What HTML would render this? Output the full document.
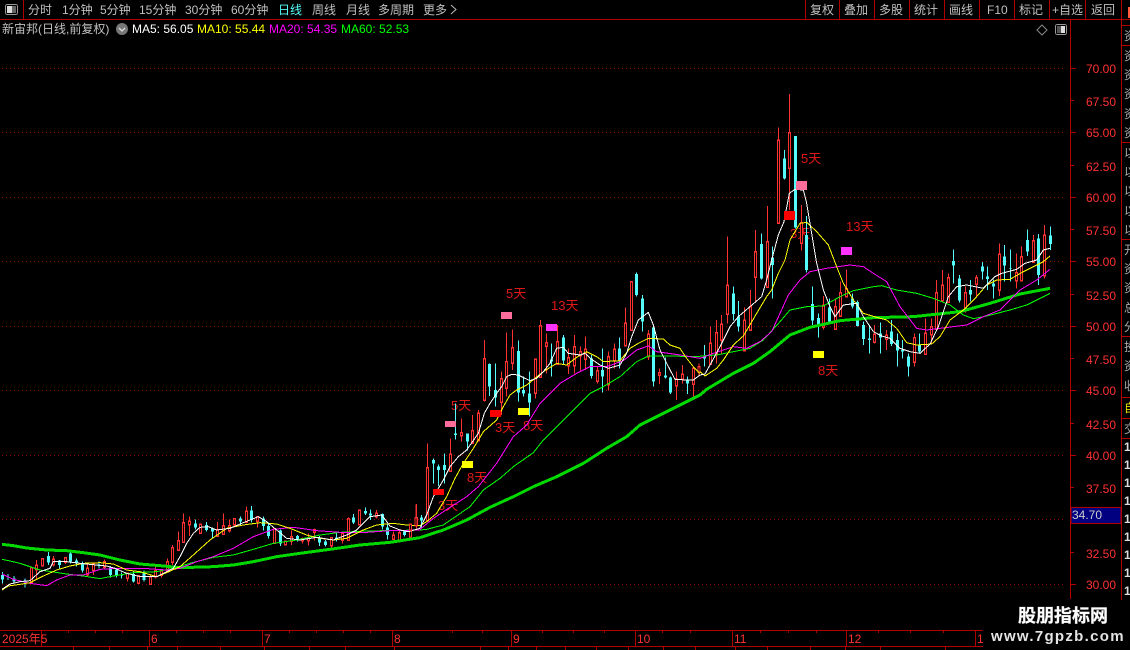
<!DOCTYPE html>
<html><head><meta charset="utf-8"><style>
html,body{margin:0;padding:0;background:#000;width:1130px;height:650px;overflow:hidden}
svg{display:block;font-family:"Liberation Sans","WenQuanYi Zen Hei","Noto Sans CJK SC",sans-serif;font-size:12px}
.c{shape-rendering:crispEdges}
.rw{stroke:#ff3232;stroke-width:3;fill:none}
.rb{stroke:#ff3232;stroke-width:9;stroke-linecap:square;fill:none}
.rk{stroke:#000;stroke-width:3;fill:none}
.cw{stroke:#54fcfc;stroke-width:3;fill:none}
.cb{stroke:#54fcfc;stroke-width:9;fill:none}
.w,.y,.m,.g,.t{fill:none}
.w{stroke:#fff;stroke-width:3}.y{stroke:#ff0;stroke-width:3}.m{stroke:#f0f;stroke-width:3}.g{stroke:#0f0;stroke-width:3}.t{stroke:#00d800;stroke-width:9}
.tb{fill:#c0c0c0}.ax{fill:#ff3232;letter-spacing:0}.lb{fill:#e01818;font-size:13px}.sd{fill:#aaa;font-size:12px}
</style></head><body>
<svg width="1130" height="650" viewBox="0 0 1130 650" xmlns="http://www.w3.org/2000/svg">
<rect width="1130" height="650" fill="#000"/>
<g class="c" stroke="#8c0000" stroke-width="1" stroke-dasharray="1 3">
<path d="M2 68.5H1066M2 132.5H1066M2 197.5H1066M2 261.5H1066M2 326.5H1066M2 390.5H1066M2 455.5H1066M2 519.5H1066M2 584.5H1066"/>
</g>
<g class="lb">
<text x="506" y="298">5天</text><text x="551" y="310">13天</text><text x="451" y="410">5天</text><text x="495" y="432">3天</text><text x="523" y="430">8天</text><text x="467" y="482">8天</text><text x="438" y="510">3天</text><text x="801" y="163">5天</text><text x="846" y="231">13天</text><text x="790" y="238">3天</text><text x="818" y="375">8天</text>
</g>
<defs>
<path id="b5" d="M94 205V248M110 198V207M127 178V195M160 180V192M196 176V185M263 207V222M280 195V208M313 188V200M382 222V232M416 230V248M451 232V250M466 215V228M485 215V224M502 188V212M517 145V185M535 125V148M550 70V125M568 66V72M602 75V97M652 92V106M670 80V100M688 80V90M703 58V72M739 36V65M772 52V62M823 88V128M857 126V132M874 112V122M908 118V120M925 115V120M943 92V94M994 116V135M1027 102V118M1045 58V118M1078 33V72M1129 42V48M1180 108V115M1198 100V118M1231 75V110M1249 55V75"/>
<path id="b3" d="M31 765V778M48 745V765M82 595V750M151 555V602M184 490V495M218 485V518M235 432V510M253 268V388M304 328V395M320 277V352M337 235V277M406 270V368M422 170V320M439 220V227M472 217V280M505 265V285M523 232V285M541 248V255M557 240V265M592 305V332M625 262V342M643 240V270M676 162V225M694 37V178M745 195V258M778 310V314M829 330V345M847 315V325M880 297V340M897 293V305"/>
<path id="b4" d="M31 762V820M49 730V790M64 705V748M82 588V670M133 693V780M151 652V718M166 487V560M202 457V590M235 153V397M268 130V232M304 400V457M370 648V710M406 652V716M421 610V676M439 598V618M523 735V755M559 738V745M643 745V815M676 732V790M694 712V732M709 610V715M727 588V630M745 565V635M796 610V660M829 565V580M898 495V598M949 550V570M964 502V570M1000 455V515M1033 438V555"/>
</defs>
<g class="c" transform="translate(0 500) scale(.33333)">
<path class="rw" d="M94 200V250M110 180V235M127 178V200M160 168V200M196 172V192M263 190V228M280 188V225M313 178V208M382 218V244M416 225V250M451 225V255M466 200V235M485 212V232M502 175V215M517 135V195M535 95V150M550 40V128M568 50V108M602 70V100M652 66V110M670 40V102M688 58V97M703 58V78M739 20V70M772 48V82M823 85V132M857 122V136M874 92V135M908 112V130M925 100V136M943 85V122M994 112V142M1027 100V130M1045 52V122M1078 28V75M1129 30V55M1180 95V118M1198 90V122M1231 75V118M1249 12V85"/>
<use href="#b5" class="rb"/><use href="#b5" class="rk"/>
<path class="cw" d="M8 216V250M24 222V240M42 228V250M75 235V262M145 156V195M178 180V207M212 155V190M230 175V200M247 185V218M297 185V205M331 198V232M349 205V232M365 218V236M400 215V248M432 212V244M586 58V88M619 66V95M637 82V115M721 50V78M754 18V68M790 50V92M806 68V115M841 88V138M892 105V125M959 108V138M976 120V140M1010 98V125M1060 42V72M1096 22V45M1111 28V60M1147 40V88M1162 72V118M1214 90V110"/>
<path class="cb" d="M8 225V238M42 236V245M75 242V248M145 168V188M178 182V195M212 160V185M230 182V190M247 192V212M297 193V198M331 202V225M349 208V225M365 224V226M400 222V245M432 218V240M586 70V82M619 75V90M637 85V95M721 55V65M754 32V60M790 55V78M806 78V108M841 92V130M892 108V120M959 112V128M976 125V135M1010 112V120M1060 52V68M1096 33V40M1111 40V46M1147 42V80M1162 82V105M1214 95V105"/>
<path class="t" d="M6 133L40 137 80 144 140 150 200 152 250 158 300 165 360 180 420 192 480 197 540 203 640 200 700 195 760 185 830 170 900 160 990 148 1080 135 1170 127 1260 113"/>
<path class="g" d="M6 178L30 183 60 190 120 210 200 222 250 228 300 236 340 228 400 218 470 215 520 205 570 190 640 172 700 165 760 148 820 130 890 120 960 105 1020 97 1100 93 1260 90"/>
<path class="m" d="M6 222L40 238 90 250 140 257 170 240 210 225 250 225 300 208 350 205 430 205 500 210 540 205 590 185 640 170 700 145 760 110 820 88 880 82 950 92 1020 97 1100 97 1170 92 1260 90"/>
<path class="y" d="M6 270L25 258 60 253 90 248 130 228 170 210 210 198 250 190 300 188 340 192 380 210 420 215 470 230 500 218 540 200 580 165 630 120 680 85 730 75 780 68 830 72 870 85 920 105 960 115 1000 120 1040 115 1090 90 1130 75 1180 70 1220 75 1260 77"/>
<path class="w" d="M6 268L30 252 60 245 90 242 120 215 150 205 160 185 200 185 240 190 290 195 320 198 345 205 380 220 420 230 470 230 500 215 520 205 540 170 560 130 580 100 600 82 625 80 650 90 690 85 730 68 775 50 800 65 830 90 860 115 900 120 950 112 1000 120 1040 105 1070 90 1110 50 1145 45 1170 78 1200 90 1225 95 1260 85"/>
</g>
<g class="c" transform="translate(400 270) scale(.33333)">
<path class="rw" d="M31 760V780M48 703V770M82 520V755M151 505V605M184 445V515M218 435V520M235 420V515M253 210V395M304 305V435M320 187V380M337 178V300M406 270V385M422 150V322M439 190V310M472 165V280M505 235V312M523 195V310M541 230V302M557 200V300M592 290V340M625 245V362M643 220V295M676 112V230M694 35V180M745 180V270M778 295V342M829 305V390M847 285V340M880 295V380M897 280V320"/>
<use href="#b3" class="rb"/><use href="#b3" class="rk"/>
<path class="cw" d="M64 735V775M100 565V640M115 583V648M133 550V640M166 400V508M202 490V542M268 280V378M286 280V410M355 212V395M370 320V380M388 305V440M455 220V320M490 195V285M574 255V325M607 235V368M658 202V295M710 8V80M727 75V185M761 170V350M796 262V325M812 320V372M862 320V372"/>
<path class="cb" d="M64 742V752M100 570V580M115 590V600M133 585V600M166 490V495M202 490V515M268 282V350M286 360V382M355 243V368M370 360V370M388 370V398M455 268V275M490 202V272M574 265V318M607 300V320M658 235V275M710 12V75M727 85V155M761 172V335M796 316V322M812 322V368M862 330V340"/>
<path class="t" d="M60 803L130 780 200 750 270 712 340 680 400 650 470 620 550 580 620 535 680 500 720 465 800 425 850 400 900 375"/>
<path class="g" d="M60 780L80 778 130 765 210 710 250 660 300 625 340 590 400 548 430 510 480 460 530 410 570 370 610 350 660 320 710 275 745 258 800 258 900 260"/>
<path class="m" d="M60 778L100 745 130 725 200 680 235 650 290 580 340 500 380 465 420 400 480 340 530 310 570 290 620 290 670 272 710 240 745 228 770 245 840 255 900 265"/>
<path class="y" d="M60 767L80 755 110 730 140 680 165 625 190 580 220 535 250 485 290 450 310 410 330 375 350 360 380 345 405 325 430 305 470 280 500 285 530 262 560 245 590 260 610 275 660 272 690 235 715 220 745 205 790 207 810 225 840 235 860 265 880 290 900 310"/>
<path class="w" d="M60 774L80 735 100 680 130 630 150 590 175 560 200 540 235 490 253 430 270 400 290 370 305 350 320 320 335 313 355 315 375 325 390 332 410 325 430 305 450 280 470 235 490 232 505 250 540 255 555 250 575 268 600 285 625 295 660 285 680 250 695 200 715 150 745 127 760 165 780 240 800 280 825 328 860 330 880 330 900 315"/>
</g>
<g class="c" transform="translate(700 90) scale(.33333)">
<path class="rw" d="M31 710V820M49 690V820M64 675V790M82 440V700M133 652V785M151 600V720M166 420V635M202 348V590M235 112V398M268 12V360M304 345V482M370 618V718M406 625V718M421 575V680M439 538V620M523 705V760M559 720V780M643 730V830M676 685V792M694 685V762M709 570V718M727 540V632M745 550V638M796 590V668M829 555V620M898 460V618M949 490V595M964 470V572M1000 435V515M1033 405V565"/>
<use href="#b4" class="rb"/><use href="#b4" class="rk"/>
<path class="cw" d="M13 765V830M100 590V692M115 633V725M184 430V568M218 470V625M253 180V268M286 138V415M319 378V548M337 590V705M355 670V742M388 625V703M457 610V655M472 632V710M490 695V765M508 705V790M541 698V790M574 690V768M592 730V830M607 750V805M625 790V860M658 730V790M761 478V580M778 555V638M812 570V635M847 516V568M862 530V600M881 568V625M913 465V575M931 478V575M982 418V498M1015 432V585M1051 410V480"/>
<path class="cb" d="M13 800V805M100 610V672M115 680V710M184 462V565M218 502V525M253 205V265M286 138V412M319 435V540M337 642V692M355 684V706M388 652V700M457 625V650M472 636V708M490 705V747M508 745V750M541 730V742M574 725V762M592 750V782M607 780V785M625 800V830M658 765V785M761 513V527M778 565V632M812 600V613M847 530V545M862 560V567M881 580V590M913 500V527M931 535V537M982 450V485M1015 445V555M1051 437V462"/>
<path class="t" d="M0 915L20 898 100 850 160 820 210 785 270 735 330 712 420 692 520 683 640 680 780 665 870 640 960 612 1050 595"/>
<path class="g" d="M0 798L50 795 100 785 150 775 190 750 240 695 270 660 320 650 370 648 420 620 460 602 520 590 545 587 590 600 650 610 700 625 750 645 790 675 820 686 860 678 930 660 980 645 1050 610"/>
<path class="m" d="M0 805L40 790 100 770 140 775 180 755 215 725 240 670 265 615 300 570 330 545 380 535 450 525 490 530 520 550 560 575 600 650 650 715 680 720 720 715 800 705 850 680 900 660 960 600 1010 570 1050 538"/>
<path class="y" d="M0 845L15 858 50 835 70 810 100 765 130 738 170 670 200 620 215 600 235 550 255 510 270 450 300 400 320 397 350 425 385 465 410 530 430 580 460 630 490 670 530 682 560 690 590 715 620 758 650 765 695 762 720 740 750 690 790 660 830 620 860 585 890 570 930 568 970 545 1010 525 1030 515 1050 498"/>
<path class="w" d="M0 855L15 852 30 825 60 770 90 710 115 680 150 650 185 620 200 570 215 510 235 435 252 395 268 310 285 298 310 300 320 340 335 430 350 520 370 600 390 650 405 680 430 645 470 640 490 680 520 725 545 738 570 745 600 775 630 785 660 790 690 762 715 710 745 620 770 590 800 585 850 595 885 560 905 550 950 538 975 520 1010 510 1030 480 1050 475"/>
</g>
<g class="c">
<rect x="433" y="489" width="11" height="6" fill="#f00"/><rect x="462" y="461" width="11" height="7" fill="#ff0"/><rect x="445" y="421" width="11" height="6" fill="#ff6e9b"/><rect x="490" y="410" width="11" height="7" fill="#f00"/><rect x="518" y="408" width="11" height="7" fill="#ff0"/><rect x="501" y="312" width="11" height="7" fill="#ff6e9b"/><rect x="546" y="324" width="11" height="7" fill="#ff32ff"/><rect x="796" y="181" width="11" height="9" fill="#ff6e9b"/><rect x="784" y="211" width="11" height="9" fill="#f00"/><rect x="841" y="247" width="11" height="8" fill="#ff32ff"/><rect x="813" y="351" width="11" height="7" fill="#ff0"/>
<g stroke="#b00000" fill="none" stroke-width="1">
<path d="M0 19.5H1130M23.5 0V19M805.5 0V19M839.5 0V19M874.5 0V19M909.5 0V19M944.5 0V19M979.5 0V19M1014.5 0V19M1049.5 0V19M1085.5 0V19M1121.5 0V25"/>
<path d="M1070.5 20V599M1121.5 25V600M1121 25.5H1130M1121 45.5H1130M1121 142.5H1130M1121 239.5H1130M1121 336.5H1130M1121 397.5H1130M1121 418.5H1130M1121 438.5H1130"/>
<path d="M1071 68.5H1076M1071 100.5H1074M1071 132.5H1076M1071 165.5H1074M1071 197.5H1076M1071 229.5H1074M1071 261.5H1076M1071 294.5H1074M1071 326.5H1076M1071 358.5H1074M1071 390.5H1076M1071 423.5H1074M1071 455.5H1076M1071 487.5H1074M1071 552.5H1074M1071 584.5H1076"/>
<path d="M0 630.5H983M0 646.5H983M41.5 630V646M149.5 630V646M262.5 630V646M392.5 630V646M511.5 630V646M635.5 630V646M732.5 630V646M846.5 630V646M975.5 630V646"/>
<path d="M68.5 631V633M95.5 631V633M122.5 631V633M176.5 631V633M203.5 631V633M230.5 631V633M289.5 631V633M316.5 631V633M343.5 631V633M370.5 631V633M452.5 631V633M482.5 631V633M542.5 631V633M573.5 631V633M604.5 631V633M662.5 631V633M690.5 631V633M760.5 631V633M788.5 631V633M816.5 631V633M878.5 631V633M910.5 631V633M943.5 631V633"/>
<path d="M73.5 647V650M109.5 647V650M147.5 647V650M177.5 647V650M220.5 647V650M264.5 647V650M309.5 647V650M345.5 647V650M394.5 647V650M480.5 647V650M508.5 647V650M536.5 647V650M565.5 647V650M596.5 647V650M628.5 647V650M663.5 647V650M695.5 647V650M735.5 647V650M767.5 647V650M810.5 647V650M845.5 647V650M880.5 647V650M945.5 647V650"/>
</g>
<rect x="1071" y="507.500" width="50" height="16" fill="#000080" stroke="#b00000"/>
<rect x="1128" y="7" width="2" height="11" fill="#ff5a3c"/>
<rect x="5.500" y="4.500" width="12" height="10" rx="2" fill="none" stroke="#999"/>
<rect x="7" y="6" width="5" height="7" fill="#ddd"/><rect x="12" y="6" width="4" height="7" fill="#666"/>
<rect x="1055.500" y="24.500" width="11" height="10" rx="2" fill="none" stroke="#999"/>
<rect x="1061" y="26" width="4" height="7" fill="#ddd"/><rect x="1057" y="26" width="4" height="7" fill="#555"/>
</g>
<path d="M1042 25L1047 30 1042 35 1037 30Z" fill="none" stroke="#888"/>
<circle cx="122" cy="29" r="6" fill="#777"/>
<path d="M119 28L122 31 125 28" fill="none" stroke="#ddd" stroke-width="1.300"/>
<path d="M451 5L456 9.500 451 14" fill="none" stroke="#bbb"/>
<g class="tb">
<text x="28" y="14">分时</text><text x="62" y="14">1分钟</text><text x="100" y="14">5分钟</text><text x="139" y="14">15分钟</text><text x="185" y="14">30分钟</text><text x="231" y="14">60分钟</text><text x="278" y="14" fill="#54fcfc">日线</text><text x="312" y="14">周线</text><text x="346" y="14">月线</text><text x="378" y="14">多周期</text><text x="423" y="14">更多</text>
<text x="810" y="14">复权</text><text x="844" y="14">叠加</text><text x="879" y="14">多股</text><text x="914" y="14">统计</text><text x="949" y="14">画线</text><text x="987" y="14">F10</text><text x="1019" y="14">标记</text><text x="1052" y="14">+自选</text><text x="1091" y="14">返回</text>
<text x="2" y="33">新宙邦(日线,前复权)</text>
</g>
<text x="132" y="33" fill="#fff">MA5: 56.05</text><text x="197" y="33" fill="#ff0">MA10: 55.44</text><text x="269" y="33" fill="#f0f">MA20: 54.35</text><text x="341" y="33" fill="#0f0">MA60: 52.53</text>
<g class="ax">
<text x="1086" y="73">70.00</text><text x="1086" y="106">67.50</text><text x="1086" y="137">65.00</text><text x="1086" y="171">62.50</text><text x="1086" y="202">60.00</text><text x="1086" y="235">57.50</text><text x="1086" y="266">55.00</text><text x="1086" y="300">52.50</text><text x="1086" y="331">50.00</text><text x="1086" y="364">47.50</text><text x="1086" y="395">45.00</text><text x="1086" y="429">42.50</text><text x="1086" y="460">40.00</text><text x="1086" y="493">37.50</text><text x="1086" y="558">32.50</text><text x="1086" y="589">30.00</text>
<text x="2" y="643">2025年5</text><text x="151" y="643">6</text><text x="264" y="643">7</text><text x="394" y="643">8</text><text x="513" y="643">9</text><text x="637" y="643">10</text><text x="734" y="643">11</text><text x="848" y="643">12</text><text x="977" y="643">1</text>
</g>
<text x="1072" y="519" fill="#ccc">34.70</text>
<g class="sd">
<text x="1124" y="40">资</text><text x="1124" y="60">资</text><text x="1124" y="79">资</text><text x="1124" y="98">资</text><text x="1124" y="118">资</text><text x="1124" y="137">资</text><text x="1124" y="157">以</text><text x="1124" y="176">以</text><text x="1124" y="195">以</text><text x="1124" y="215">以</text><text x="1124" y="234">以</text><text x="1124" y="254">开</text><text x="1124" y="273">资</text><text x="1124" y="292">资</text><text x="1124" y="312">总</text><text x="1124" y="331">分</text><text x="1124" y="351">投</text><text x="1124" y="370">资</text><text x="1124" y="390">收</text>
<text x="1124" y="412" fill="#e0e000">自</text><text x="1124" y="433">交</text>
</g>
<g fill="#ddd" font-weight="bold">
<text x="1124" y="451">1</text><text x="1124" y="469">1</text><text x="1124" y="487">1</text><text x="1124" y="505">1</text><text x="1124" y="523">1</text><text x="1124" y="541">1</text><text x="1124" y="559">1</text><text x="1124" y="577">1</text><text x="1124" y="595">1</text>
</g>
<text x="1018" y="622" fill="#fff" font-weight="bold" font-size="18" style="paint-order:stroke;stroke:#777;stroke-width:.6px">股朋指标网</text>
<text x="991" y="641" fill="#e4e4e4" font-weight="bold" font-size="15" letter-spacing="1.300" style="font-size:15px">www.7gpzb.com</text>
</svg>
</body></html>
